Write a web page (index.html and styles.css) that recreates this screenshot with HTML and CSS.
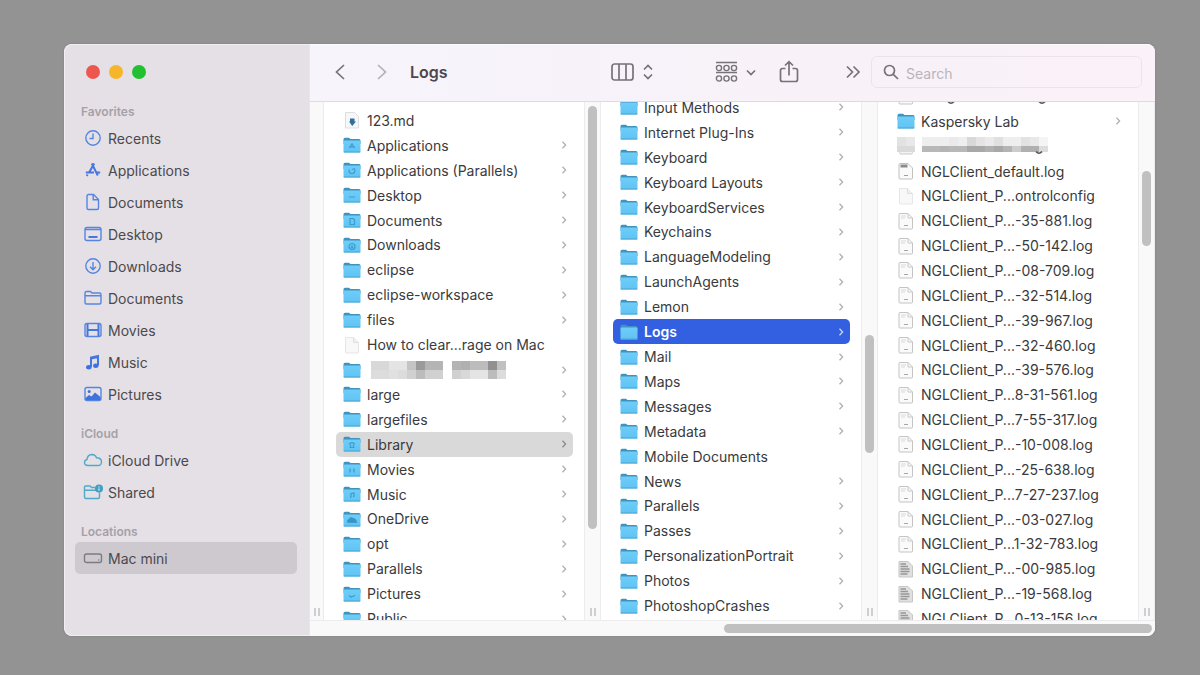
FILE: index.html
```html
<!DOCTYPE html>
<html lang="en">

<head>
    <meta charset="UTF-8">
    <meta name="viewport" content="width=device-width, initial-scale=1">
    <title>Logs</title>
    <link rel="stylesheet" href="styles.css">
</head>

<body>

    <!-- Icon sprite -->
    <svg class="sprite" aria-hidden="true">
        <defs>
            <linearGradient id="folder-fill" x1="0" y1="0" x2="0" y2="1">
                <stop offset="0" stop-color="#6fcdf8" />
                <stop offset="1" stop-color="#5fc3f3" />
            </linearGradient>
        </defs>
        <symbol id="folder" viewBox="0 0 18 18">
            <path d="M.5 3.2Q.5 1.700 2 1.700H6L7.500 3H16Q17.500 3 17.500 4.500V8H.5z" fill="#3f94bf" />
            <rect x=".5" y="4.600" width="17" height="12" rx="1.200" fill="url(#folder-fill)" />
            <path d="M.8 16H17.200" stroke="#4aa5d0" stroke-width="1" />
        </symbol>
        <symbol id="glyph-app" viewBox="0 0 18 18"><path d="M6.500 12L9 8L11.500 12M6 11H12" /></symbol>
        <symbol id="glyph-parallels" viewBox="0 0 18 18"><path d="M6 8.500Q6 12.500 9 12.500Q12 12.500 12 8.500M9 8.500L12 7.500" /></symbol>
        <symbol id="glyph-desktop" viewBox="0 0 18 18"><path d="M6 11H12" /></symbol>
        <symbol id="glyph-doc" viewBox="0 0 18 18"><path d="M7 7.500H10L11.500 9V13.500H7z" /></symbol>
        <symbol id="glyph-down" viewBox="0 0 18 18"><circle cx="9" cy="10.500" r="3" /><path d="M9 9V12M8 11L9 12L10 11" /></symbol>
        <symbol id="glyph-library" viewBox="0 0 18 18"><path d="M6 9L9 7.500L12 9M6.500 12.500H11.500M7.500 9.500V12M10.500 9.500V12" /></symbol>
        <symbol id="glyph-movies" viewBox="0 0 18 18"><path d="M7 8.500V12.500M11 8.500V12.500M7 10.500H8M10 10.500H11" /></symbol>
        <symbol id="glyph-music" viewBox="0 0 18 18"><path d="M8 12.500V8.500L11 8V11.500M7 12.500H8M10 11.500H11" /></symbol>
        <symbol id="glyph-cloud" viewBox="0 0 18 18"><path d="M5 12.500Q3.500 10.500 6 9.500Q7.500 6.500 10 8.500Q13 8.500 13.500 12.500z" fill="#3794c8" /></symbol>
        <symbol id="glyph-pictures" viewBox="0 0 18 18"><path d="M6 10.500L8 12L12 10.500" /></symbol>

        <symbol id="file" viewBox="0 0 18 18">
            <path d="M2.500 1.500H10.500L15.500 6.500V16Q15.500 17 14.500 17H3.500Q2.500 17 2.500 16z" fill="#f8f8f8" stroke="#e6e6e6" />
            <path d="M10.500 1.500V6.500H15.500" fill="#efefef" stroke="#dfdfdf" />
        </symbol>
        <symbol id="md" viewBox="0 0 18 18">
            <path d="M2.500 1.500H11.500L15.500 5.500V17H2.500z" fill="#f6f7f8" stroke="#dcdfe1" />
            <path d="M7 7.500H11.500V10.500H13L9.200 15L6 10.500H7z" fill="#326f98" />
        </symbol>
        <symbol id="log" viewBox="0 0 18 18">
            <path d="M2 2.500Q2 1.500 3 1.500H11L15.500 6V16Q15.500 17 14.500 17H3Q2 17 2 16z" fill="#fafafa" stroke="#c4c4c4" />
            <path d="M11 1.500V6H15.500" fill="none" stroke="#cacaca" />
            <path d="M4 4H9M4 6H8" stroke="#d9d9d9" />
            <path d="M7 13.500H11" stroke="#a8a8a8" />
        </symbol>
        <symbol id="log-head" viewBox="0 0 18 18">
            <path d="M2 2.500Q2 1.500 3 1.500H11L15.500 6V16Q15.500 17 14.500 17H3Q2 17 2 16z" fill="#fafafa" stroke="#c0c0c0" />
            <path d="M3.500 4H10.500" stroke="#8c8c8c" stroke-width="3" />
            <path d="M7 13.500H11" stroke="#a0a0a0" />
        </symbol>
        <symbol id="log-text" viewBox="0 0 18 18">
            <path d="M2 1.500H11L15.500 6V17H2z" fill="#e0e0e0" stroke="#c6c6c6" />
            <path d="M3.500 4H9M3.500 6.500H11M3.500 9H12.500M3.500 11.500H12.500M3.500 14H10.500" stroke="#979797" stroke-width="1.600" />
        </symbol>
        <symbol id="blurred" viewBox="0 0 18 18">
            <path d="M2.500 9V15.500Q2.500 17 4 17H14Q15.500 17 15.500 15.500V9" fill="#f4f4f4" stroke="#c8c8c8" />
            <rect y="0" width="9" height="9" fill="#e2e2e2" />
            <rect x="9" y="0" width="9" height="9" fill="#e8e8e8" />
            <rect y="9" width="18" height="6" fill="#dadada" />
        </symbol>
        <symbol id="chevron" viewBox="0 0 6 10"><path d="M1.500 1.800L4.600 5L1.500 8.200" fill="none" stroke="currentColor" stroke-width="1.300" /></symbol>
    </svg>

    <main class="window">
        <aside class="sidebar">
            <div class="lights">
                <button class="light close" aria-label="Close"></button>
                <button class="light minimize" aria-label="Minimize"></button>
                <button class="light zoom" aria-label="Zoom"></button>
            </div>

            <nav>
                <h2>Favorites</h2>
                <a href="#"><svg viewBox="0 0 20 18"><circle cx="10" cy="9" r="7.200" /><path d="M10 4.500V9.500H6.500" /></svg>Recents</a>
                <a href="#"><svg viewBox="0 0 20 18"><path class="thick" d="M8.800 2.500L14.800 14.500M11.200 2.500L5.800 12M2.800 11.500H11M13.800 11.500H17.200M4.600 13.500L3.800 15" /></svg>Applications</a>
                <a href="#"><svg viewBox="0 0 20 18"><path d="M5.500 1.500H10.500L15.500 6.500V15Q15.500 16.500 14 16.500H5.500Q4 16.500 4 15V3Q4 1.500 5.500 1.500zM10.200 1.800V6.800H15.200" /></svg>Documents</a>
                <a href="#"><svg viewBox="0 0 20 18"><rect x="2" y="2.500" width="16" height="13" rx="2" /><path d="M2 4.500H18" /><path class="thick" d="M5.500 12H14.500" /></svg>Desktop</a>
                <a href="#"><svg viewBox="0 0 20 18"><circle cx="10" cy="9" r="7.200" /><path d="M10 5V12.500M7 9.800L10 12.800L13 9.800" /></svg>Downloads</a>
                <a href="#"><svg viewBox="0 0 20 18"><path d="M2 4Q2 2.500 3.500 2.500H7.500L9 4H16.500Q18 4 18 5.500V13.500Q18 15 16.500 15H3.500Q2 15 2 13.500zM2 6.800H18" /></svg>Documents</a>
                <a href="#"><svg viewBox="0 0 20 18"><rect x="2" y="2.500" width="16" height="13" rx="2" /><path class="thick" d="M4.500 3V15M15.500 3V15M5 9H15" /></svg>Movies</a>
                <a href="#"><svg viewBox="0 0 20 18"><path class="thick" d="M8 14V4.500L15 3V12.500M8 5.500L15 4" /><ellipse class="solid" cx="5.800" cy="14.300" rx="2.700" ry="2.200" /><ellipse class="solid" cx="12.800" cy="12.800" rx="2.700" ry="2.200" /></svg>Music</a>
                <a href="#"><svg viewBox="0 0 20 18"><rect x="2" y="2.500" width="16" height="13" rx="2" /><circle class="solid" cx="6.200" cy="6.500" r="1.500" /><path class="solid" d="M2.500 13L6 10L8.500 11.500L12 7.500L17.500 12V15H2.500z" /></svg>Pictures</a>
            </nav>

            <nav class="cloud">
                <h2>iCloud</h2>
                <a href="#"><svg viewBox="0 0 20 18"><path d="M5 14.500Q1.500 14.300 1.500 11.500Q1.500 9 4 8.500Q4.500 3.800 8.800 3.500Q12.300 3.500 13.500 6.800Q18.500 6.800 18.500 11Q18.300 14.500 15 14.500z" /></svg>iCloud Drive</a>
                <a href="#"><svg viewBox="0 0 20 18"><path d="M12 4.500H8.500L7 3H2.500Q1.500 3 1.500 4V14Q1.500 15.500 3 15.500H15Q16.500 15.500 16.500 14V9.500M1.500 7.300H13" /><circle class="solid" cx="16" cy="5.500" r="4" /><path class="cut" d="M16 3.500V4.500M16 5.500V7.500" /></svg>Shared</a>
            </nav>

            <nav class="places">
                <h2>Locations</h2>
                <a href="#" class="active"><svg viewBox="0 0 20 18"><rect x="1.500" y="5" width="17" height="8.500" rx="2" /><path d="M15.300 11H16.300" /></svg>Mac mini</a>
            </nav>
        </aside>

        <section class="content">
            <header class="toolbar">
                <button class="tool" aria-label="Back"><svg width="12" height="18" viewBox="0 0 12 18"><path d="M10 2L2.500 9L10 16" /></svg></button>
                <button class="tool forward" aria-label="Forward"><svg width="12" height="18" viewBox="0 0 12 18"><path d="M2 2L9.500 9L2 16" /></svg></button>
                <h1>Logs</h1>
                <button class="tool view" aria-label="View"><svg width="44" height="20" viewBox="0 0 44 20"><rect x="1" y="2" width="21" height="16" rx="2.500" /><path d="M8 2V18M15 2V18M33 7.500L37 3.500L41 7.500M33 12.500L37 16.500L41 12.500" /></svg></button>
                <button class="tool group" aria-label="Group"><svg width="42" height="22" viewBox="0 0 42 22"><path d="M1 1.500H22M1 11.500H22" /><g class="thin"><circle cx="4" cy="7" r="2.600" /><circle cx="11.500" cy="7" r="2.600" /><circle cx="19" cy="7" r="2.600" /><circle cx="4" cy="17.500" r="2.600" /><circle cx="11.500" cy="17.500" r="2.600" /><circle cx="19" cy="17.500" r="2.600" /></g><path d="M32 9.500L36 13.500L40 9.500" /></svg></button>
                <button class="tool share" aria-label="Share"><svg width="20" height="24" viewBox="0 0 20 24"><path d="M6.500 8.500H3.500Q1.500 8.500 1.500 10.500V19.500Q1.500 21.500 3.500 21.500H16.500Q18.500 21.500 18.500 19.500V10.500Q18.500 8.500 16.500 8.500H13.500M10 15.500V2M6 5.500L10 1.700L14 5.500" /></svg></button>
                <button class="tool more" aria-label="More"><svg width="16" height="14" viewBox="0 0 16 14"><path d="M2 1.500L7.500 7L2 12.500M8.500 1.500L14 7L8.500 12.500" /></svg></button>
                <label class="search">
                    <svg width="16" height="16" viewBox="0 0 16 16"><circle cx="6.500" cy="6.500" r="5" /><path d="M10.300 10.300L15 15" /></svg>
                    <input type="text" placeholder="Search" aria-label="Search">
                </label>
            </header>

            <div class="browser">
                <div class="gutter first"><span></span><span class="grip"></span></div>

                <div class="column">
                    <ul id="home"></ul>
                    <div class="gutter"><div class="track" style="grid-template-rows: 2fr 423fr 79fr"><span class="thumb"></span></div><span class="grip"></span></div>
                </div>

                <div class="column">
                    <ul id="library"></ul>
                    <div class="gutter"><div class="track" style="grid-template-rows: 231fr 118fr 155fr"><span class="thumb"></span></div><span class="grip"></span></div>
                </div>

                <div class="column">
                    <ul id="logs"></ul>
                    <div class="gutter"><div class="track" style="grid-template-rows: 67fr 75fr 362fr"><span class="thumb"></span></div><span class="grip"></span></div>
                </div>
            </div>

            <footer class="scroll-x"><span class="thumb"></span></footer>
        </section>
    </main>

    <script>
        // [name, icon, glyph, mosaic] - icon defaults to a folder
        const home = [
            ["123.md", "md"], ["Applications", "folder", "app"], ["Applications (Parallels)", "folder", "parallels"],
            ["Desktop", "folder", "desktop"], ["Documents", "folder", "doc"], ["Downloads", "folder", "down"],
            ["eclipse"], ["eclipse-workspace"], ["files"], ["How to clear...rage on Mac", "file"], ["", "folder", "", "hidden-home"],
            ["large"], ["largefiles"], ["Library", "folder", "library"], ["Movies", "folder", "movies"],
            ["Music", "folder", "music"], ["OneDrive", "folder", "cloud"], ["opt"], ["Parallels"],
            ["Pictures", "folder", "pictures"], ["Public", "folder", "desktop"]
        ];

        const library = ["Input Methods", "Internet Plug-Ins", "Keyboard", "Keyboard Layouts", "KeyboardServices",
            "Keychains", "LanguageModeling", "LaunchAgents", "Lemon", "Logs", "Mail", "Maps", "Messages", "Metadata",
            "Mobile Documents", "News", "Parallels", "Passes", "PersonalizationPortrait", "Photos", "PhotoshopCrashes"
        ].map(name => [name]);

        const logs = [["", "log", "", "hidden-top"], ["Kaspersky Lab"], ["", "blurred", "", "hidden-log"],
            ["NGLClient_default.log", "log-head"], ["NGLClient_P...ontrolconfig", "file"]];
        ["-35-881", "-50-142", "-08-709", "-32-514", "-39-967", "-32-460", "-39-576", "8-31-561", "7-55-317",
            "-10-008", "-25-638", "7-27-237", "-03-027", "1-32-783"
        ].forEach(n => logs.push([`NGLClient_P...${n}.log`, "log"]));
        ["-00-985", "-19-568", "0-13-156"].forEach(n => logs.push([`NGLClient_P...${n}.log`, "log-text"]));

        // Shades of the pixelated names, one array per line of blocks (0 = gap)
        const mosaics = {
            "hidden-home": { x: 4, heights: [9, 9], rows: [
                ["d8", "d8", "e4", "e4", "c4", "9a", "b4", "b4", 0, "b4", "b0", "bc", "bc", "90", "c0"],
                ["dc", "dc", "e0", "dc", "d0", "bc", "d0", "d0", 0, "d0", "d8", "e4", "e4", "bc", "dc"]] },
            "hidden-log": { x: 1, heights: [9, 6], rows: [
                ["ee", "ee", "ee", "ea", "ee", "d8", "e4", "ea", "e0", "ee", "ee", "e2", "e8", "f4"],
                ["b8", "b8", "b4", "b8", "b8", "a8", "a8", "b0", "a8", "b4", "cc", "b0", "b0", "dc"]] },
            "hidden-top": { x: 0, heights: [], rows: [] }
        };
        // Tails of the letters that hang below the blocks
        const tails = { "hidden-home": [], "hidden-log": [118], "hidden-top": [30, 121] };

        function drawMosaic(id) {
            const { x, heights, rows } = mosaics[id];
            let out = '<svg class="mosaic" width="150" height="20" viewBox="0 0 150 20" role="img" aria-label="Hidden name">';
            rows.forEach((row, r) => row.forEach((shade, c) => {
                if (shade) out += `<rect x="${x + c * 9}" y="${1 + r * 9}" width="9" height="${heights[r]}" fill="#${shade.repeat(3)}"/>`;
            }));
            tails[id].forEach(t => out += `<path d="M${t - 3} 15.500Q${t} 19 ${t + 3} 15.500" fill="none" stroke="#555" stroke-width="1.600"/>`);
            return out + '</svg>';
        }

        function fill(id, items, selected) {
            document.getElementById(id).innerHTML = items.map(([name, icon = "folder", glyph, mosaic]) => `
                <li><button class="row${name === selected ? " selected" : ""}">
                    <svg class="icon"><use href="#${icon}"/>${glyph ? `<use class="glyph" href="#glyph-${glyph}"/>` : ""}</svg>
                    ${mosaic ? drawMosaic(mosaic) : `<span>${name}</span>`}
                    ${icon === "folder" && name !== "Mobile Documents" ? '<svg class="arrow"><use href="#chevron"/></svg>' : ""}
                </button></li>`).join("");
        }

        fill("home", home, "Library");
        fill("library", library, "Logs");
        fill("logs", logs);
    </script>
</body>

</html>
```
FILE: styles.css
```css
* {
    box-sizing: border-box;
}

body {
    margin: 0;
    height: 100vh;
    min-height: 480px;
    padding: 44px 45px 39px 64px;
    background: #939393;
    font-family: Inter, "Liberation Sans", sans-serif;
    font-size: 14px;
    color: #3a3a3c;
}

button {
    font: inherit;
    color: inherit;
    background: none;
    border: none;
    padding: 0;
    text-align: left;
}

ul {
    list-style: none;
    margin: 0;
    padding: 0;
}

.sprite {
    position: absolute;
    width: 0;
    height: 0;
}

.window {
    display: flex;
    height: 100%;
    border-radius: 8px;
    overflow: hidden;
    background: #fff;
    box-shadow: 0 0 2px #7d7d7d;
}

/* Sidebar */
.sidebar {
    flex: 0 0 246px;
    padding: 20px 12px 0 10px;
    background: #e5e0e6;
    border: 1px solid #f1eef2;
    border-right-color: #e9e5ea;
    border-radius: 8px 0 0 8px;
}

.lights {
    display: flex;
    gap: 9px;
    padding-left: 11px;
    margin-bottom: 23px;
}

.light {
    width: 14px;
    height: 14px;
    border-radius: 50%;
}

.close {
    background: #ee5750;
}

.minimize {
    background: #f6b62a;
}

.zoom {
    background: #21c031;
}

.sidebar h2 {
    margin: 0;
    padding-left: 6px;
    font-size: 12px;
    font-weight: 600;
    line-height: 20px;
    color: #a5a1a7;
}

.sidebar a {
    display: flex;
    align-items: center;
    gap: 5px;
    height: 32px;
    padding-left: 8px;
    border-radius: 5px;
    color: #4b494d;
    text-decoration: none;
}

.sidebar a svg {
    width: 20px;
    height: 18px;
    fill: none;
    stroke: #5585e2;
    stroke-width: 1.4;
}

.sidebar .thick {
    stroke: #4577de;
    stroke-width: 2;
}

.sidebar .solid {
    fill: #3f72de;
    stroke: none;
}

.sidebar .cloud {
    margin-top: 14px;
}

.sidebar .places {
    margin-top: 14px;
}

.sidebar .cloud svg {
    stroke: #4fa9c9;
}

.sidebar .cloud .solid {
    fill: #3f9fc4;
}

.sidebar .cut {
    stroke: #e5e0e6;
}

.sidebar .places svg {
    stroke: #7d7a80;
}

.sidebar .active {
    background: #cec9cf;
}

/* Toolbar */
.content {
    flex: 1;
    min-width: 0;
    display: flex;
    flex-direction: column;
}

.toolbar {
    flex: 0 0 58px;
    display: flex;
    align-items: center;
    padding: 0 13px 2px 24px;
    background: linear-gradient(90deg, #f7f4fb, #f8f1f8 60%, #fbf1f9);
    border-top: 1px solid #fdfcfd;
    border-bottom: 1px solid #dedae0;
}

.toolbar h1 {
    flex: 1;
    margin: 0 0 0 22px;
    font-size: 16px;
    font-weight: 600;
    color: #4a484c;
}

.tool svg,
.search svg {
    display: block;
    fill: none;
    stroke: #757278;
    stroke-width: 1.7;
}

.tool .thin {
    stroke-width: 1.4;
}

.forward {
    margin-left: 30px;
}

.toolbar .forward svg {
    stroke: #b3b0b6;
}

.group {
    margin-left: 60px;
}

.share {
    margin-left: 22px;
}

.more {
    margin-left: 46px;
}

.search {
    flex: 0 0 271px;
    display: flex;
    align-items: center;
    gap: 7px;
    height: 32px;
    margin-left: 10px;
    padding: 0 11px;
    border: 1px solid #ebe3ec;
    border-radius: 6px;
}

.search input {
    flex: 1;
    min-width: 0;
    padding: 2px 0 0;
    border: none;
    outline: none;
    background: none;
    font: inherit;
}

.search input::placeholder {
    color: #b9b4bb;
}

/* Column browser */
.browser {
    flex: 1;
    min-height: 0;
    display: flex;
    overflow: hidden;
}

.column {
    flex: 1;
    min-width: 0;
    display: flex;
}

.column ul {
    flex: 1;
    min-width: 0;
    display: flex;
    flex-direction: column;
    padding: 0 11px 0 12px;
}

/* Each list is scrolled to its own place */
#home {
    margin: 6px 0 -11px;
}

#library {
    margin: -7px 0 2px;
}

#logs {
    margin: -18px 0 -11px;
}

.column li {
    flex: 1;
    min-height: 0;
    display: flex;
}

.row {
    flex: 1;
    min-width: 0;
    display: flex;
    align-items: center;
    gap: 6px;
    padding: 0 6px 0 7px;
    border-radius: 5px;
    white-space: nowrap;
}

.row.selected {
    background: #dad9da;
}

#library .selected {
    background: #3260e1;
    color: #fff;
    font-weight: 600;
}

.icon {
    flex: none;
    width: 18px;
    height: 18px;
}

.glyph {
    fill: none;
    stroke: #3b9ccd;
    stroke-width: 1.2;
}

.arrow {
    width: 6px;
    height: 10px;
    margin-left: auto;
    color: #b0b0b2;
}

.selected .arrow {
    color: #8a8a8c;
}

#library .selected .arrow {
    color: #c9d6fa;
}

.mosaic {
    flex: none;
}

.gutter {
    flex: 0 0 17px;
    display: flex;
    flex-direction: column;
    justify-content: space-between;
    align-items: center;
    padding: 2px 0 4px;
    background: #faf9fa;
    border: 1px solid #ececee;
    border-width: 0 1px;
}

.gutter.first {
    flex-basis: 14px;
    border-left: none;
}

.track {
    flex: 1;
    display: grid;
    width: 9px;
}

.track .thumb {
    grid-row: 2;
}

.thumb {
    background: #c1c0c1;
    border-radius: 5px;
}

.grip {
    width: 6px;
    height: 8px;
    border: 2px solid #cfcfd1;
    border-width: 0 2px;
}

.scroll-x {
    flex: 0 0 16px;
    display: flex;
    justify-content: flex-end;
    align-items: center;
    padding: 0 3px;
    background: #faf9fa;
    border-top: 1px solid #ececee;
}

.scroll-x .thumb {
    width: 51%;
    height: 9px;
}
```
